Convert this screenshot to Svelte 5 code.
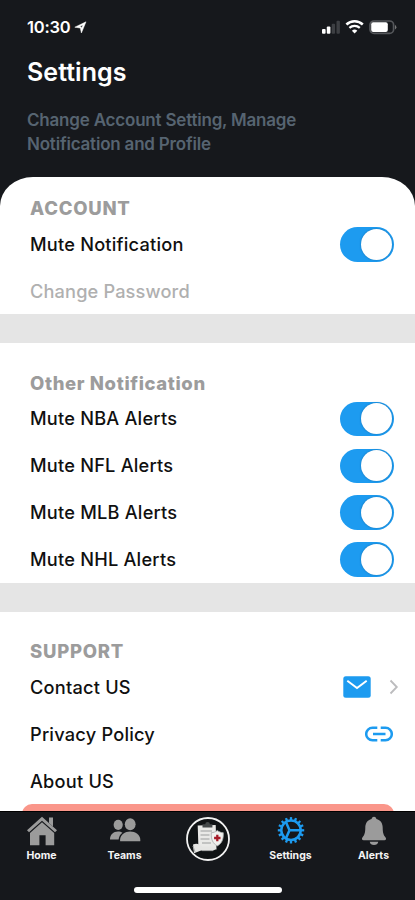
<script>
  let accountMuted = $state(true);
  let leagues = $state([
    { name: 'NBA', on: true },
    { name: 'NFL', on: true },
    { name: 'MLB', on: true },
    { name: 'NHL', on: true }
  ]);
  const teeth = Array.from({ length: 16 }, (_, i) => i * 22.5);
</script>

{#snippet toggle(on, flip, label)}
  <button class="toggle" class:off={!on} onclick={flip} aria-label={label} aria-pressed={on}>
    <span class="knob"></span>
  </button>
{/snippet}

<div class="phone">
  <header>
    <div class="status">
      <div class="clock">
        <span class="time">10:30</span>
        <svg width="13" height="13" viewBox="0 0 13 13"><path d="M12 .8 7.400 12 6.300 7 .8 6.200Z M8.900 3.900 5.400 5.400 7.100 5.800 7.500 7.200Z" fill="#fff" stroke="#fff" stroke-width=".5" stroke-linejoin="round" fill-rule="evenodd" /></svg>
      </div>
      <svg class="indicators" width="76" height="16" viewBox="0 0 76 16">
        <rect x="1" y="10" width="3.600" height="4.700" rx="1" fill="#fff" />
        <rect x="5.800" y="7.600" width="3.600" height="7.100" rx="1" fill="#fff" />
        <rect x="10.700" y="4.800" width="3.400" height="9.900" rx="1" fill="#3d3f43" />
        <rect x="15.500" y="1.800" width="3.400" height="12.900" rx="1" fill="#3d3f43" />
        <path d="M25.400 5.500a12 12 0 0 1 16.400 0" fill="none" stroke="#fff" stroke-width="2.500" />
        <path d="M28.400 8.900a7.600 7.600 0 0 1 10.400 0" fill="none" stroke="#fff" stroke-width="2.200" />
        <path d="M30.900 11.700a4.200 4.200 0 0 1 5.400 0L33.600 14.600Z" fill="#fff" />
        <rect x="49" y="2" width="23.600" height="12.400" rx="4" fill="none" stroke="#55575b" stroke-width="1.700" />
        <rect x="50.200" y="3.300" width="16.600" height="9.800" rx="2" fill="#fff" />
        <path d="M74 5.800q2.800 2.400 0 4.800Z" fill="#777" />
      </svg>
    </div>
    <h1>Settings</h1>
    <p>Change Account Setting, Manage<br />Notification and Profile</p>
  </header>

  <main>
    <section class="account">
      <h2 class="caps">ACCOUNT</h2>
      <div class="row">
        <span>Mute Notification</span>
        {@render toggle(accountMuted, () => (accountMuted = !accountMuted), 'Mute Notification')}
      </div>
      <div class="row dim"><span>Change Password</span></div>
    </section>

    <section class="other">
      <h2>Other Notification</h2>
      {#each leagues as league}
        <div class="row">
          <span>Mute {league.name} Alerts</span>
          {@render toggle(league.on, () => (league.on = !league.on), league.name)}
        </div>
      {/each}
    </section>

    <section class="support">
      <h2 class="caps">SUPPORT</h2>
      <div class="row contact">
        <span>Contact US</span>
        <div class="actions">
          <svg width="28" height="22" viewBox="0 0 28 22">
            <rect x=".3" y=".3" width="27.400" height="21.400" rx="2.500" fill="#1d9bf0" />
            <path d="m4.300 4.800 9.700 7.200 9.700-7.200" fill="none" stroke="#fff" stroke-width="2" />
          </svg>
          <svg width="10" height="16" viewBox="0 0 10 16"><path d="m1.500 1.500 6.300 6.500-6.300 6.500" fill="none" stroke="#bcbcbe" stroke-width="1.800" /></svg>
        </div>
      </div>
      <div class="row">
        <span>Privacy Policy</span>
        <svg class="link" width="28" height="16" viewBox="0 0 28 16">
          <path d="M12.300 1.700H7.500a6.300 6.300 0 0 0 0 12.600h4.800M15.700 1.700h4.800a6.300 6.300 0 0 1 0 12.600h-4.800M8 8h12.500" fill="none" stroke="#1d9bf0" stroke-width="2.500" />
        </svg>
      </div>
      <div class="row about"><span>About US</span></div>
      <div class="logout"></div>
    </section>
  </main>

  <nav>
    <div class="tab">
      <svg width="32" height="30" viewBox="0 0 32 30" fill="#9b9b9b">
        <path d="M16 .8 31 14.200l-2 2.100L16 4.700 3 16.300l-2-2.100L11 5.200Z" />
        <path d="M23 1.400h4v9.200l-4-3.500Z" />
        <path d="M16 6.300 28.200 17v12.200h-8.600v-10h-6.200v10H4V17Z" />
      </svg>
      <span>Home</span>
    </div>
    <div class="tab">
      <svg width="32" height="30" viewBox="0 0 32 30" fill="#9b9b9b">
        <ellipse cx="9.200" cy="8.800" rx="4.600" ry="5.100" />
        <path d="M1 23.500c0-5 3.400-8.100 8-8.100 1.800 0 3.300.5 4.500 1.300-2.200 1.600-3.500 3.700-3.900 6.800Z" />
        <ellipse cx="21.200" cy="8.300" rx="5.400" ry="6" />
        <path d="M11.200 25.300c-1-5.800 4.400-9.800 10-9.800s11 4 10 9.800Z" />
      </svg>
      <span>Teams</span>
    </div>
    <div class="tab center">
      <svg width="46" height="46" viewBox="0 0 46 46">
        <circle cx="23" cy="23" r="21" fill="#101315" stroke="#f2f2f2" stroke-width="1.800" />
        <path d="m12.700 9.600 18-.6.8 24.500-18 .8Z" fill="#e9e9e7" />
        <path d="M17.500 11.500V8.300h2.800a2.300 2.300 0 0 1 4.600 0h2.500v3.200Z" fill="#45494a" />
        <path d="M15.500 15h11.500M15.500 19h9M15.500 23h9M17 27h9" stroke="#b5b7b7" stroke-width="1.400" />
        <path d="M8 28.500c4-2 7 0 9.500 2h10.500c3 0 3 3.500 0 4H16l-7 2.700Z" fill="#e5e5e3" />
        <path d="M17 34.600h11M8 30l2 6" stroke="#a9abab" fill="none" />
        <path d="M32.300 14.500c2 1.500 3.800 2.100 6 2.200.4 6.500-1.500 11-6 13.200-4.500-2.200-6.400-6.700-6-13.200 2.200-.1 4-.7 6-2.200Z" fill="#f0f0ee" stroke="#a6aaa9" stroke-width=".8" />
        <path d="M32.300 18.800v6.400M29.100 22h6.400" stroke="#a51a27" stroke-width="2.300" />
      </svg>
    </div>
    <div class="tab">
      <svg width="32" height="30" viewBox="0 0 32 30">
        <g transform="translate(16 14.300)" stroke="#1d9bf0" fill="none">
          <circle r="9.700" stroke-width="2.500" />
          {#each teeth as angle}
            <path transform="rotate({angle})" d="M0-10V-13.200" stroke-width="2.300" />
          {/each}
          <path d="M-1.500 0H9M-1.500 0-5-8M-1.500 0-5 8" stroke-width="2.500" />
        </g>
      </svg>
      <span>Settings</span>
    </div>
    <div class="tab">
      <svg width="32" height="30" viewBox="0 0 32 30" fill="#9b9b9b">
        <path d="M16 .8c1.500 0 2.300 1 2.400 2.300 4.200 1 6.300 4.300 6.300 8.700 0 5 .9 7.400 2.900 9.600.9 1.100.5 2.900-1.200 2.900H5.600c-1.700 0-2.100-1.800-1.200-2.900 2-2.200 2.900-4.600 2.900-9.600 0-4.400 2.100-7.700 6.300-8.700C13.700 1.800 14.500.8 16 .8Z" />
        <path d="M11.700 25.700h8.600c-.4 2.100-2 3.200-4.300 3.200s-3.900-1.100-4.300-3.200Z" />
      </svg>
      <span>Alerts</span>
    </div>
    <div class="home-bar"></div>
  </nav>
</div>

<style>
  :global(body) { margin: 0; background: #16181c; }
  .phone {
    width: 415px;
    height: 900px;
    overflow: hidden;
    display: flex;
    flex-direction: column;
    font-family: Inter, "Liberation Sans", sans-serif;
    background: #16181c;
  }
  header { height: 177px; box-sizing: border-box; padding: 18px 18px 0 27px; color: #fff; }
  .status { display: flex; justify-content: space-between; height: 18px; align-items: center; }
  .clock { display: flex; align-items: center; gap: 3px; }
  .time { font-size: 16.5px; font-weight: 600; letter-spacing: -0.2px; }
  h1 { margin: 19px 0 0; font-size: 25px; line-height: 34px; font-weight: 600; letter-spacing: 0.05px; }
  p { margin: 19.4px 0 0; font-size: 17px; line-height: 24px; font-weight: 600; color: #566471; letter-spacing: -0.2px; white-space: nowrap; }
  main { flex: 1; min-height: 0; background: #fff; border-radius: 33px 33px 0 0 / 29px 29px 0 0; overflow: hidden; }
  section { padding: 0 21px 0 30px; }
  .account { padding-top: 18px; height: 119px; border-bottom: 29px solid #e5e5e5; }
  .other { padding-top: 26.5px; height: 213.5px; border-bottom: 29px solid #e5e5e5; }
  .support { padding-top: 26px; }
  h2 { margin: 0; height: 26px; font-size: 18.5px; line-height: 26px; font-weight: 800; color: #9c9c9c; letter-spacing: 0.62px; white-space: nowrap; }
  .caps { letter-spacing: 0.75px; }
  .row { display: flex; justify-content: space-between; align-items: center; height: 47px; font-size: 18.2px; font-weight: 500; letter-spacing: 0.22px; color: #101010; }
  .row > span { padding-bottom: 2px; }
  .dim { color: #b0b0b0; letter-spacing: 0.15px; }
  .other .row { height: 46.9px; }
  .other .row > span { padding-bottom: 1px; }
  .contact { margin-right: -5px; }
  .actions { display: flex; align-items: center; gap: 18px; padding-bottom: 1px; }
  .link { margin: 0 1px 1px 0; }
  .about { height: 46px; }
  .row.about > span { padding-bottom: 0; }
  .logout { height: 48px; margin-left: -8px; background: #fa968a; border-radius: 10px; }
  .toggle { width: 54.5px; height: 34.5px; padding: 1.75px; border: 0; border-radius: 18px; background: #1d9bf0; display: flex; justify-content: flex-end; }
  .toggle.off { justify-content: flex-start; background: #ccc; }
  .knob { width: 31px; height: 31px; border-radius: 50%; background: #fff; box-shadow: 0 0 2px #0b4f8299; }
  nav { position: relative; height: 89px; display: flex; background: #16181c; border-top: 1px solid #000; box-sizing: border-box; }
  .tab { flex: 1; display: flex; flex-direction: column; align-items: center; padding-top: 4px; }
  .tab span { margin-top: 3px; font-size: 10.5px; line-height: 13px; font-weight: 700; color: #f4f4f4; }
  .home-bar { position: absolute; left: 134px; top: 75px; width: 148px; height: 6px; border-radius: 3px; background: #fff; }
</style>
